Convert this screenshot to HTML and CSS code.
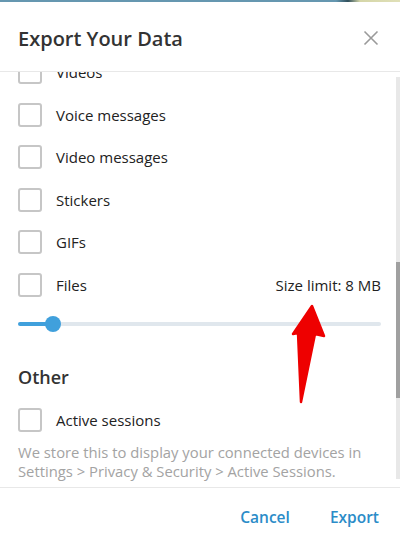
FILE: index.html
```html
<!DOCTYPE html>
<html lang="en">
<head>
  <meta charset="UTF-8" />
  <title>Export Your Data</title>
  <link rel="stylesheet" href="styles.css">
</head>
<body>
  <div class="topline"></div>

  <div class="dialog">
    <!-- Header -->
    <div class="header">
      <h1>Export Your Data</h1>
      <svg class="close" width="16" height="16" viewBox="0 0 16 16">
        <path d="M1.5 1.5 L14.5 14.5 M14.5 1.5 L1.5 14.5" stroke="#9a9a9a" stroke-width="1.6" fill="none"/>
      </svg>
    </div>

    <!-- Scrolling content -->
    <div class="content">
      <div class="list">
        <div class="row"><span class="check"></span><span>Videos</span></div>
        <div class="row"><span class="check"></span><span>Voice messages</span></div>
        <div class="row"><span class="check"></span><span>Video messages</span></div>
        <div class="row"><span class="check"></span><span>Stickers</span></div>
        <div class="row"><span class="check"></span><span>GIFs</span></div>
        <div class="row"><span class="check"></span><span class="label">Files</span><span class="limit">Size limit: 8 MB</span></div>

        <div class="slider">
          <div class="fill"></div>
          <div class="thumb"></div>
          <div class="track"></div>
        </div>

        <h2>Other</h2>
        <div class="row"><span class="check"></span><span>Active sessions</span></div>
        <p class="note">We store this to display your connected devices in Settings &gt; Privacy &amp; Security &gt; Active Sessions.</p>
      </div>
      <div class="scrollbar">
        <div class="scroll-thumb"></div>
      </div>
    </div>

    <!-- Footer -->
    <div class="footer">
      <button>Cancel</button>
      <button>Export</button>
    </div>
  </div>

  <!-- annotation arrow -->
  <svg class="arrow" width="40" height="100" viewBox="290 304 40 100">
    <polygon points="312,306 324,336 315,334 301,402 298,333 293,334" fill="#ee0000" stroke="#ee0000" stroke-width="2.5" stroke-linejoin="round"/>
  </svg>
</body>
</html>
```

FILE: styles.css
```css
body {
  margin: 0;
  background: #fff;
  font-family: "Open Sans", Arial, sans-serif;
  color: #222;
}
.topline {
  height: 2px;
  background: linear-gradient(90deg, #6597b0 0, #6597b0 84%, #30505c 87%, #d5d6a8 90%, #e0e0b8 100%);
}
.dialog {
  display: flex;
  flex-direction: column;
  height: 538px;
}
.header {
  height: 69px;
  display: flex;
  align-items: center;
  justify-content: space-between;
  padding: 0 21px 0 18px;
  border-bottom: 1px solid #e8e8e8;
}
.header h1 {
  margin: 0;
  font-size: 20px;
  font-weight: 600;
  color: #333;
  padding-top: 4px;
}
.close {
  margin-top: 3px;
}
.content {
  flex: 1;
  display: flex;
  overflow: hidden;
  border-bottom: 1px solid #e8e8e8;
}
.list {
  flex: 1;
  margin-top: -21px;
  padding: 0 15px 0 18px;
}
.row {
  height: 42.5px;
  display: flex;
  align-items: center;
  font-size: 15px;
}
.check {
  width: 20px;
  height: 20px;
  border: 2px solid #c6c6c6;
  border-radius: 3px;
  margin-right: 14px;
  flex-shrink: 0;
}
.label {
  flex: 1;
}
.limit {
  font-size: 15px;
}
.slider {
  position: relative;
  height: 16px;
  margin: 10px 0 0;
  display: flex;
  align-items: center;
}
.track {
  flex: 1;
  height: 4px;
  background: #e0e7ed;
  border-radius: 2px;
}
.fill {
  width: 35px;
  height: 4px;
  background: #40a0dc;
  border-radius: 2px 0 0 2px;
}
.thumb {
  width: 16px;
  height: 16px;
  border-radius: 50%;
  background: #40a0dc;
  margin-left: -8px;
  margin-right: -8px;
  position: relative;
  z-index: 1;
}
h2 {
  margin: 33px 0 0;
  font-size: 18px;
  font-weight: 600;
  color: #333;
  line-height: 24px;
}
.list h2 + .row {
  margin-top: 10px;
}
.note {
  margin: 1px 0 0;
  font-size: 14.8px;
  line-height: 19px;
  color: #a3a3a3;
}
.scrollbar {
  width: 4px;
  margin: 5px 0 8px;
  background: #e8e8e8;
}
.scroll-thumb {
  margin-top: 185px;
  height: 136px;
  background: #a0a0a0;
}
.footer {
  height: 52px;
  display: flex;
  justify-content: flex-end;
  align-items: center;
  gap: 40px;
  padding: 5px 21px 0 0;
  box-sizing: border-box;
}
.footer button {
  border: none;
  background: none;
  padding: 0;
  font-family: inherit;
  font-size: 15.5px;
  font-weight: 600;
  color: #2b8cc8;
  cursor: pointer;
}
.arrow {
  position: absolute;
  left: 290px;
  top: 304px;
}
```
